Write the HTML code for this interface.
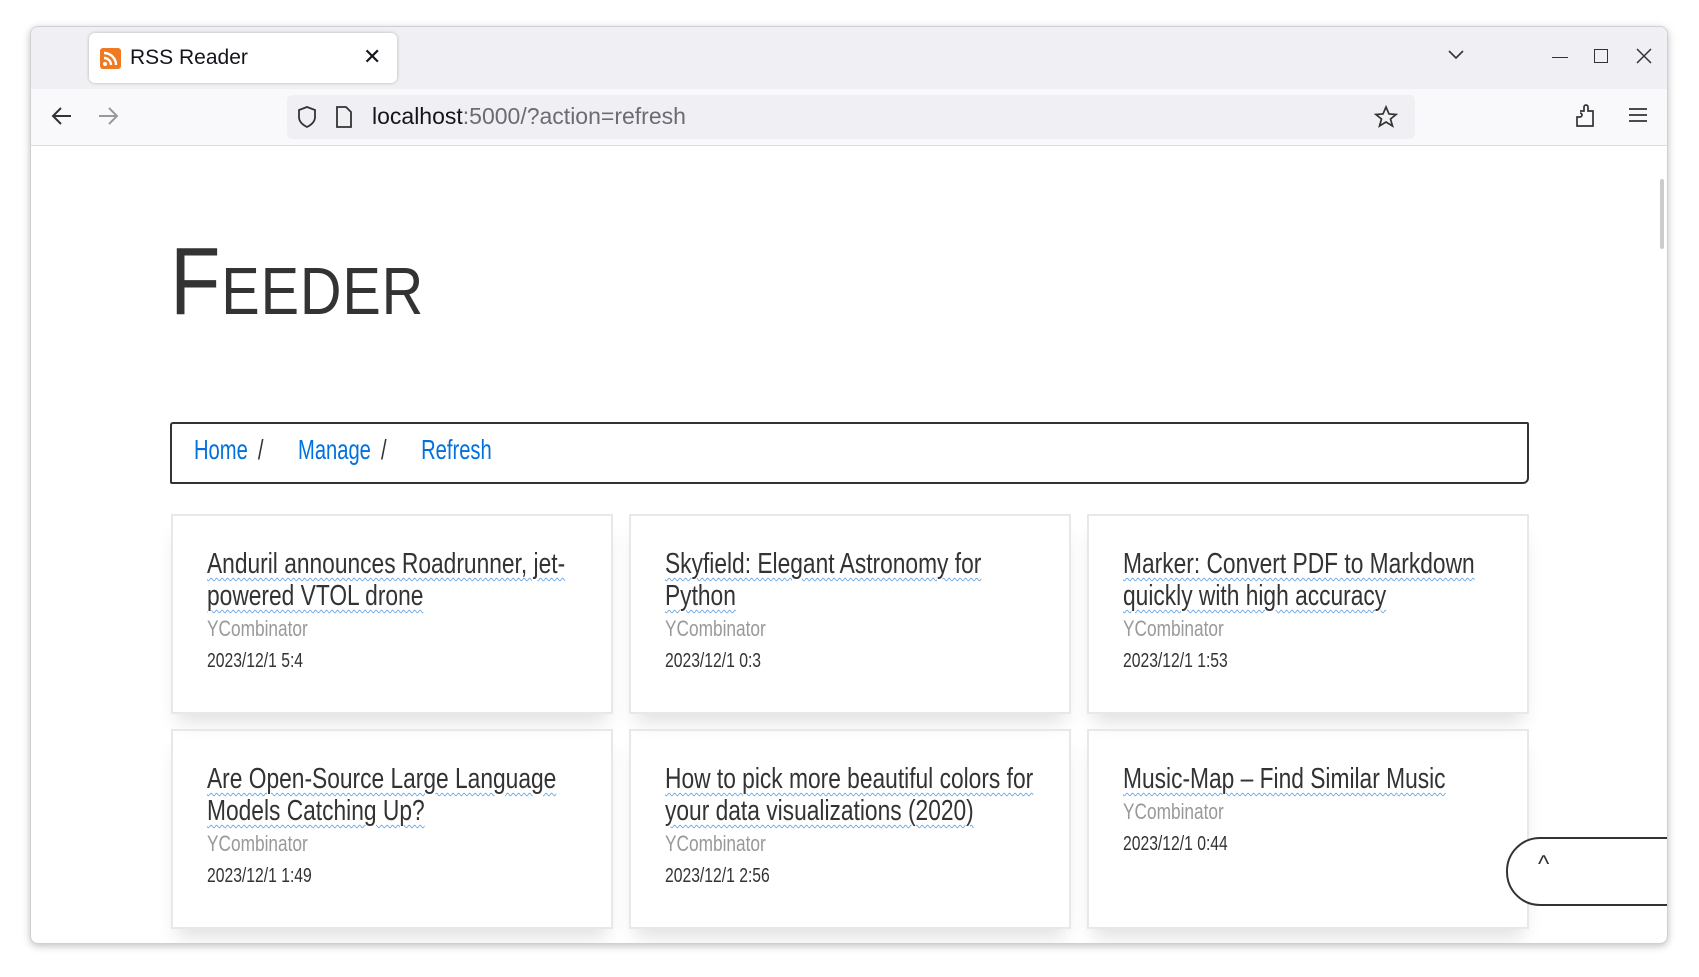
<!DOCTYPE html>
<html><head><meta charset="utf-8"><style>
*{box-sizing:border-box;margin:0;padding:0}
body{width:1699px;height:977px;background:#fff;position:relative;overflow:hidden;font-family:"Liberation Sans",sans-serif}
.win{position:absolute;left:30px;top:26px;width:1638px;height:918px;border:1px solid #cfcfd4;border-radius:8px;overflow:hidden;background:#fff;box-shadow:0 2px 8px rgba(0,0,0,.25)}
.tabbar{position:absolute;left:0;top:0;right:0;height:62px;background:#f0f0f4}
.tab{position:absolute;left:58px;top:6px;width:308px;height:50px;background:#fff;border-radius:6px;box-shadow:0 0 3px rgba(0,0,0,.25);font:21px "Liberation Sans",sans-serif;color:#15141a}
.toolbar{position:absolute;left:0;top:62px;right:0;height:57px;background:#f9f9fb;border-bottom:1px solid #ddd}
.url{position:absolute;left:256px;top:6px;width:1128px;height:44px;background:#f0f0f4;border-radius:5px;font:23px "Liberation Sans",sans-serif;color:#15141a}
.content{position:absolute;left:0;top:120px;right:0;bottom:0}
h1{position:absolute;left:139px;top:80px;font-size:96px;font-weight:normal;font-variant:small-caps;color:#333;letter-spacing:1px;transform:scaleX(.86);transform-origin:left}
.nav{position:absolute;left:139px;top:275px;width:1359px;height:62px;border:2px solid #333;border-radius:3px 2px 6px 2px;padding:10px 22px}
.nav div{font-size:28px;transform:scaleX(.72);transform-origin:left;white-space:nowrap}
.nav a{color:#0071de;text-decoration:none}
.nav span{color:#333;margin:0 48px 0 14px}
.card{position:absolute;width:442px;height:200px;border:2px solid #e8e8e8;box-shadow:0 14px 18px -6px rgba(0,0,0,.12);padding:32px 34px}
.in{width:470px;transform:scaleX(.785);transform-origin:left top}
.card a{font-size:29px;line-height:32px;color:#333;text-decoration:underline wavy #6aa7e6;text-decoration-thickness:1px;text-underline-offset:4px;display:block}
.src{color:#999;font-size:22px;margin-top:4px}
.dt{color:#333;font-size:20px;margin-top:8px}
</style></head><body>
<div class="win">
<div class="tabbar">
<div class="tab"><svg style="position:absolute;left:11px;top:15px" width="21" height="21"><rect width="21" height="21" rx="3" fill="#f07a22"/><circle cx="5" cy="16" r="2" fill="#fff"/><path d="M4 10a7 7 0 0 1 7 7M4 5a12 12 0 0 1 12 12" stroke="#fff" stroke-width="2.4" fill="none"/></svg><span style="position:absolute;left:41px;top:13px">RSS Reader</span><span style="position:absolute;left:274px;top:11px;font-size:22px">✕</span></div>
<svg style="position:absolute;left:1416px;top:22px" width="18" height="12"><path d="M2 2l7 7 7-7" stroke="#333" stroke-width="1.6" fill="none"/></svg>
<div style="position:absolute;left:1521px;top:30px;width:16px;border-top:1.5px solid #333"></div>
<div style="position:absolute;left:1563px;top:22px;width:14px;height:14px;border:1.5px solid #333"></div>
<svg style="position:absolute;left:1605px;top:21px" width="16" height="16"><path d="M1 1l14 14M15 1L1 15" stroke="#333" stroke-width="1.5"/></svg>
</div>
<div class="toolbar">
<svg style="position:absolute;left:20px;top:17px" width="22" height="20"><path d="M20 10H3M10 2L2 10l8 8" stroke="#333" stroke-width="2" fill="none"/></svg>
<svg style="position:absolute;left:66px;top:17px" width="22" height="20"><path d="M2 10h17M12 2l8 8-8 8" stroke="#999" stroke-width="2" fill="none"/></svg>
<div class="url">
<svg style="position:absolute;left:10px;top:11px" width="20" height="22"><path d="M10 1l8 3v7c0 5-4 8-8 10-4-2-8-5-8-10V4z" stroke="#333" stroke-width="1.8" fill="none"/></svg>
<svg style="position:absolute;left:48px;top:11px" width="18" height="22"><path d="M2 1h9l5 5v15H2z" stroke="#333" stroke-width="1.8" fill="none"/></svg>
<span style="position:absolute;left:85px;top:8px">localhost<span style="color:#6b6b73">:5000/?action=refresh</span></span>
<svg style="position:absolute;left:1087px;top:10px" width="24" height="24"><path d="M12 2l3 7 7 .5-5.5 4.5 2 7L12 17l-6.5 4 2-7L2 9.5 9 9z" stroke="#333" stroke-width="1.7" fill="none"/></svg>
</div>
<svg style="position:absolute;left:1543px;top:14px" width="22" height="26"><path d="M6 8h4V4a2 2 0 0 1 4 0v4h5v15H3V14h3a2 2 0 0 0 0-4" stroke="#333" stroke-width="1.7" fill="none"/></svg>
<svg style="position:absolute;left:1598px;top:18px" width="18" height="16"><path d="M0 2h18M0 8h18M0 14h18" stroke="#333" stroke-width="1.7"/></svg>
</div>
<div class="content">
<div style="position:absolute;right:3px;top:32px;width:4px;height:70px;background:#ccc;border-radius:2px"></div>
<h1>Feeder</h1>
<div class="nav"><div><a>Home</a><span>/</span><a>Manage</a><span>/</span><a>Refresh</a></div></div>
<div class="card" style="left:140px;top:367px"><div class="in"><a>Anduril announces Roadrunner, jet-powered VTOL drone</a><div class="src">YCombinator</div><div class="dt">2023/12/1 5:4</div></div></div>
<div class="card" style="left:598px;top:367px"><div class="in"><a>Skyfield: Elegant Astronomy for Python</a><div class="src">YCombinator</div><div class="dt">2023/12/1 0:3</div></div></div>
<div class="card" style="left:1056px;top:367px"><div class="in"><a>Marker: Convert PDF to Markdown quickly with high accuracy</a><div class="src">YCombinator</div><div class="dt">2023/12/1 1:53</div></div></div>
<div class="card" style="left:140px;top:582px"><div class="in"><a>Are Open-Source Large Language Models Catching Up?</a><div class="src">YCombinator</div><div class="dt">2023/12/1 1:49</div></div></div>
<div class="card" style="left:598px;top:582px"><div class="in"><a>How to pick more beautiful colors for your data visualizations (2020)</a><div class="src">YCombinator</div><div class="dt">2023/12/1 2:56</div></div></div>
<div class="card" style="left:1056px;top:582px"><div class="in"><a>Music-Map – Find Similar Music</a><div class="src">YCombinator</div><div class="dt">2023/12/1 0:44</div></div></div>
<div style="position:absolute;left:1475px;top:690px;width:200px;height:69px;border:2px solid #333;border-radius:34px 0 0 34px;background:#fff;font-size:24px;padding:12px 0 0 30px;color:#333">^</div>
</div>
</div>
</body></html>
